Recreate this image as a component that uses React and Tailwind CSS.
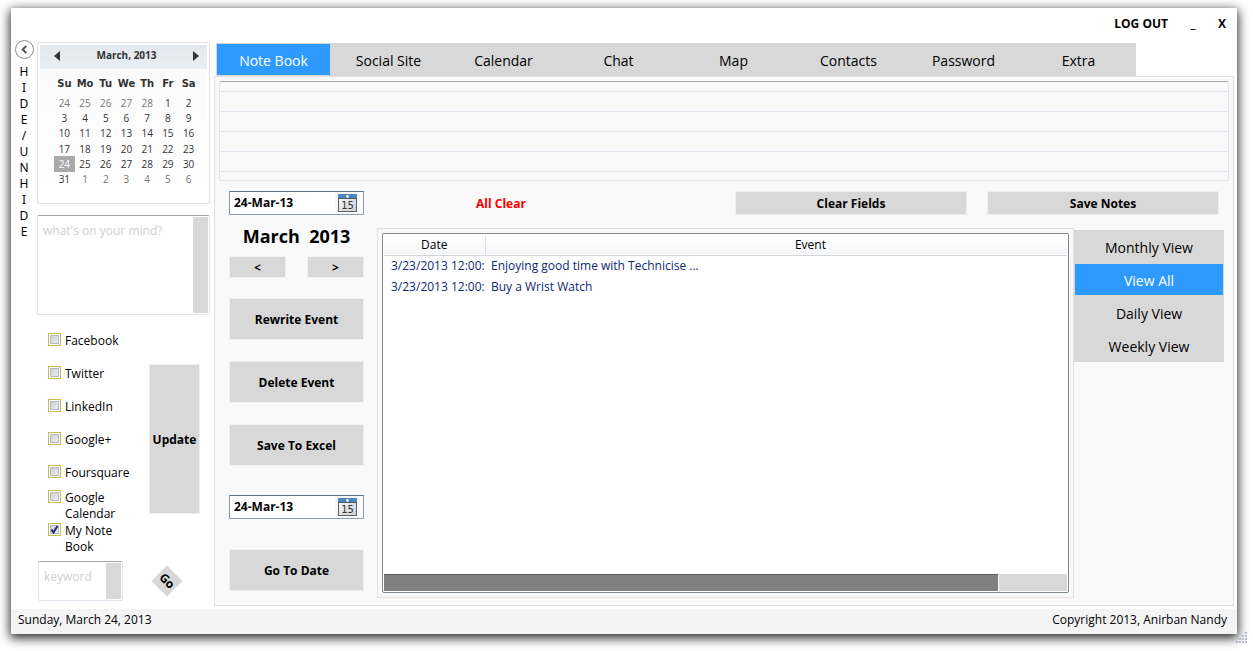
import React, { useState } from "react";

const TABS = ["Note Book", "Social Site", "Calendar", "Chat", "Map", "Contacts", "Password", "Extra"];
const VIEWS = ["Monthly View", "View All", "Daily View", "Weekly View"];
const NETWORKS = ["Facebook", "Twitter", "LinkedIn", "Google+", "Foursquare", "Google Calendar", "My Note Book"];
const WEEKDAYS = ["Su", "Mo", "Tu", "We", "Th", "Fr", "Sa"];
const WEEKS = [
  [24, 25, 26, 27, 28, 1, 2],
  [3, 4, 5, 6, 7, 8, 9],
  [10, 11, 12, 13, 14, 15, 16],
  [17, 18, 19, 20, 21, 22, 23],
  [24, 25, 26, 27, 28, 29, 30],
  [31, 1, 2, 3, 4, 5, 6],
];
const EVENTS = [
  ["3/23/2013 12:00:", "Enjoying good time with Technicise ..."],
  ["3/23/2013 12:00:", "Buy a Wrist Watch"],
];

function PushButton({ className, children, ...rest }) {
  return (
    <button type="button" className={`border border-[#f0f0f0] bg-[#d8d8d8] pt-0.5 font-bold ${className}`} {...rest}>
      {children}
    </button>
  );
}

function Calendar() {
  const isOutside = (row, day) => (row === 0 && day > 20) || (row === 5 && day < 10);
  return (
    <section aria-label="Calendar" className="h-[162px] rounded-xs border border-[#e4dfe1] bg-white p-0.5">
      <div className="flex h-6 items-center justify-between bg-linear-to-b from-[#e2e8ee] to-[#e9eef3] pr-1.5 pb-0.5 pl-3 text-[#333]">
        <button type="button" aria-label="Previous month" className="p-0.5">
          <svg viewBox="0 0 6 10" className="h-2.5 w-1.5"><path d="M6 0v10L0 5z" fill="#333" /></svg>
        </button>
        <span className="text-[10px] font-bold">March, 2013</span>
        <button type="button" aria-label="Next month" className="p-0.5">
          <svg viewBox="0 0 6 10" className="h-2.5 w-1.5"><path d="M0 0v10l6-5z" fill="#333" /></svg>
        </button>
      </div>
      <div className="bg-linear-to-b from-[#fafafa] to-white pt-1 pr-2 pl-3.5">
        <table className="h-[114px] w-full table-fixed border-collapse text-center text-[10px] leading-[14px] text-[#333]">
          <thead>
            <tr className="h-[22px] font-['DejaVu_Sans',sans-serif]">
              {WEEKDAYS.map((d) => <th key={d} className="p-0 font-bold">{d}</th>)}
            </tr>
          </thead>
          <tbody>
            {WEEKS.map((week, row) => (
              <tr key={row}>
                {week.map((day) => (
                  <td
                    key={day}
                    className={`p-0 ${row === 4 && day === 24 ? "bg-[#a9a9a9] text-white" : isOutside(row, day) ? "text-[#777]" : ""}`}
                  >
                    {day}
                  </td>
                ))}
              </tr>
            ))}
          </tbody>
        </table>
      </div>
    </section>
  );
}

function Checkbox({ label, defaultChecked }) {
  return (
    <label className="flex h-[33px] items-center">
      <span className="flex gap-1">
        <span className="grid size-[13px] shrink-0 grid-cols-1 grid-rows-1">
          <input
            type="checkbox"
            defaultChecked={defaultChecked}
            className="peer col-start-1 row-start-1 size-[13px] appearance-none border border-[#bfbf4c] bg-linear-to-br from-[#c4c8d0] to-[#f6f6f6] shadow-[inset_0_0_0_1px_#ffffff,inset_0_0_0_2px_#b4bac2]"
          />
          <svg viewBox="0 0 13 13" className="pointer-events-none invisible col-start-1 row-start-1 size-[13px] peer-checked:visible">
            <path d="M3.5 6.5 5.5 9.5 9.5 3" fill="none" stroke="#26267f" strokeWidth="2" />
          </svg>
        </span>
        <span className="w-16 leading-4">{label}</span>
      </span>
    </label>
  );
}

function DateField({ label }) {
  return (
    <div className="flex h-6 w-full items-center border border-[#8b9bac] border-t-[#5f7388] bg-white pl-1">
      <input aria-label={label} defaultValue="24-Mar-13" className="w-full min-w-0 flex-1 bg-transparent font-bold outline-none" />
      <button type="button" aria-label="Pick a date" className="flex h-full w-7 shrink-0 items-center justify-center bg-[#f9f9f9]">
        <svg viewBox="0 0 19 18" className="mr-1 h-[18px] w-[19px]">
          <defs>
            <linearGradient id="page" x1="0" y1="0" x2="1" y2="1">
              <stop offset="0" stopColor="#fff" />
              <stop offset="1" stopColor="#c8ccd2" />
            </linearGradient>
          </defs>
          <rect x=".5" y=".5" width="18" height="17" fill="url(#page)" stroke="#5b5f66" />
          <rect width="19" height="4" fill="#4a86bd" />
          <rect y="4" width="19" height="1" fill="#45566a" />
          <circle cx="9.5" cy="2.5" r="1.4" fill="#fff" />
          <text x="9.5" y="15" textAnchor="middle" fontSize="10" fontFamily="DejaVu Sans" fill="#333">15</text>
        </svg>
      </button>
    </div>
  );
}

function Sidebar() {
  return (
    <aside className="flex w-[173px] shrink-0 flex-col">
      <Calendar />
      <div className="mt-[11px] flex h-[100px] rounded-xs border border-[#dfe5ee] border-t-[#a6a6a6] bg-white p-px">
        <textarea aria-label="Status" placeholder="what's on your mind?" className="min-w-0 flex-1 resize-none px-1 pt-1.5 leading-4 outline-none placeholder:text-[#cfcfcf]" />
        <div className="w-[15px] bg-[#d8d8d8]" />
      </div>
      <div className="mt-[9px] flex justify-between pr-2.5 pl-[11px]">
        <div>
          {NETWORKS.map((n) => <Checkbox key={n} label={n} defaultChecked={n === "My Note Book"} />)}
        </div>
        <PushButton className="mt-10 h-[150px] w-[51px]">Update</PushButton>
      </div>
      <div className="mt-1.5 flex items-center justify-between pr-8 pl-px">
        <div className="flex h-10 w-[85px] rounded-xs border border-[#dfe5ee] border-t-[#a6a6a6] p-px">
          <input aria-label="Keyword" placeholder="keyword" className="mb-2 w-full min-w-0 flex-1 pl-1 outline-none placeholder:text-[#cfcfcf]" />
          <div className="w-[15px] bg-[#d8d8d8]" />
        </div>
        <button type="button" className="flex size-[22px] rotate-45 items-center justify-center bg-[#d8d8d8] font-bold">Go</button>
      </div>
    </aside>
  );
}

function EventTable() {
  return (
    <div className="min-w-0 flex-1 border border-[#e9dfe0] p-1">
      <div className="flex h-full flex-col rounded-xs border border-[#828790] bg-white p-px">
        <div className="flex-1 overflow-hidden">
          <table className="w-[110%] table-fixed border-collapse">
            <thead>
              <tr className="h-5 border-b border-[#d5d5d5] bg-linear-to-b from-white to-[#f5f6f8]">
                <th className="w-[101px] border-r border-[#dcdfe3] p-0 font-normal">Date</th>
                <th className="p-0 font-normal">Event</th>
              </tr>
            </thead>
            <tbody className="text-[#0f2a75]">
              {EVENTS.map(([date, text]) => (
                <tr key={text} className="h-[21px]">
                  <td className="overflow-hidden p-0 pl-[7px] whitespace-nowrap">{date}</td>
                  <td className="p-0 pl-1.5">{text}</td>
                </tr>
              ))}
            </tbody>
          </table>
        </div>
        <div className="h-[17px] bg-[#d8d8d8]">
          <div className="h-full w-[90%] border-t border-r border-t-[#5c5c5c] border-r-white bg-[#808080]" />
        </div>
      </div>
    </div>
  );
}

function NoteBook({ view, setView }) {
  return (
    <div className="flex flex-1 flex-col border border-[#e4dee1] bg-[#f9f9f9] px-1 pt-1 pb-[7px]">
      <textarea
        aria-label="Notes"
        className="block h-[100px] w-full resize-none rounded-xs border border-[#e2e6f0] border-t-[#a9abb0] bg-[linear-gradient(#e2e6f0_1px,transparent_1px)] bg-[length:100%_20px] bg-[position:0_9px] px-1 leading-5 outline-none"
      />
      <div className="mt-2.5 flex items-center pr-2.5 pl-2.5">
        <div className="w-[135px]"><DateField label="Note date" /></div>
        <p className="w-[274px] pt-0.5 text-center font-bold text-[#f00]">All Clear</p>
        <div className="ml-auto flex gap-5">
          <PushButton className="h-6 w-[232px]">Clear Fields</PushButton>
          <PushButton className="h-6 w-[232px]">Save Notes</PushButton>
        </div>
      </div>
      <div className="flex flex-1 pt-[13px] pr-[5px] pl-2.5">
        <div className="mr-[13px] flex w-[135px] shrink-0 flex-col">
          <h2 className="text-center text-lg leading-4 font-bold whitespace-pre">March  2013</h2>
          <div className="mt-3 flex justify-between">
            <PushButton className="h-[22px] w-[57px]" aria-label="Previous month">&lt;</PushButton>
            <PushButton className="h-[22px] w-[57px]" aria-label="Next month">&gt;</PushButton>
          </div>
          <div className="mt-5 flex flex-col gap-[21px]">
            <PushButton className="h-[42px]">Rewrite Event</PushButton>
            <PushButton className="h-[42px]">Delete Event</PushButton>
            <PushButton className="h-[42px]">Save To Excel</PushButton>
          </div>
          <div className="mt-[29px]"><DateField label="Go to date" /></div>
          <PushButton className="mt-[30px] h-[42px]">Go To Date</PushButton>
        </div>
        <EventTable />
        <nav aria-label="Views" className="mt-0.5 flex w-[150px] shrink-0 flex-col self-start bg-[#d8d8d8]">
          {VIEWS.map((v) => (
            <button
              key={v}
              type="button"
              onClick={() => setView(v)}
              className={`h-[33px] border border-[#d8d8d8] pt-0.5 text-sm ${v === view ? "bg-[#2e99ff] text-white" : ""}`}
            >
              {v}
            </button>
          ))}
        </nav>
      </div>
    </div>
  );
}

export default function App() {
  const [tab, setTab] = useState("Note Book");
  const [view, setView] = useState("View All");
  return (
    <div className="flex min-h-screen bg-white pt-2 pr-4 pb-[17px] pl-[11px] font-['Open_Sans',sans-serif] text-xs text-black">
      <div className="relative flex flex-1 flex-col bg-white shadow-[0_3px_10px_1px_rgba(0,0,0,0.85)]">
        <header className="flex h-[34px] items-center justify-end gap-5 pr-[11px] pb-0.5 font-bold">
          <button type="button">LOG OUT</button>
          <button type="button" aria-label="Minimize" className="w-2.5">_</button>
          <button type="button" aria-label="Close" className="w-2">X</button>
        </header>
        <div className="flex flex-1 pr-[3px] pl-[3px]">
          <div className="mr-[3px] flex w-5 shrink-0 flex-col items-center">
            <button type="button" aria-label="Hide or unhide the sidebar" className="-mt-0.5 flex size-5 shrink-0 items-center justify-center">
              <svg viewBox="0 0 20 20" className="size-5">
                <circle cx="10.5" cy="9.5" r="9" fill="#fff" stroke="#8c8c8c" />
                <path d="M12.3 6 8.7 9.5l3.6 3.5" fill="none" stroke="#555" strokeWidth="2" />
              </svg>
            </button>
            <div className="mt-1 flex flex-col items-center font-['Noto_Sans',sans-serif] leading-4">
              {[..."HIDE/UNHIDE"].map((c, i) => <span key={i}>{c}</span>)}
            </div>
          </div>
          <Sidebar />
          <main className="ml-1 flex min-w-0 flex-1 flex-col pt-px pb-[3px]">
            <nav aria-label="Sections" className="ml-0.5 flex">
              {TABS.map((t) => (
                <button
                  key={t}
                  type="button"
                  onClick={() => setTab(t)}
                  className={`h-[33px] w-[115px] border border-[#d8d8d8] pt-0.5 text-sm ${t === tab ? "bg-[#2e99ff] text-white" : "bg-[#d8d8d8]"}`}
                >
                  {t}
                </button>
              ))}
            </nav>
            <NoteBook view={view} setView={setView} />
          </main>
        </div>
        <footer className="flex h-[25px] items-center justify-between bg-[#f4f4f4] pr-2.5 pb-1 pl-[7px]">
          <span>Sunday, March 24, 2013</span>
          <span>Copyright 2013, Anirban Nandy</span>
        </footer>
        <svg viewBox="0 0 12 12" className="absolute -right-[11px] -bottom-2.5 size-3" fill="#b4bccb">
          <path d="M9 0h2v2H9zM6 3h2v2H6zM9 3h2v2H9zM3 6h2v2H3zM6 6h2v2H6zM9 6h2v2H9zM0 9h2v2H0zM3 9h2v2H3zM6 9h2v2H6zM9 9h2v2H9z" />
        </svg>
      </div>
    </div>
  );
}
